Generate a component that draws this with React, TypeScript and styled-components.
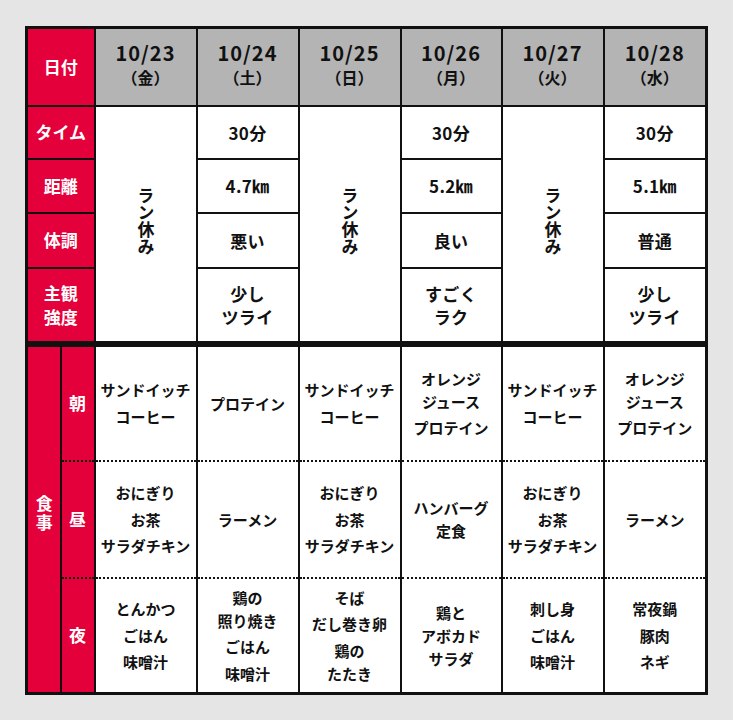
import React from 'react';
import styled, { createGlobalStyle, css } from 'styled-components';

const RED = '#e4003a';
const INK = '#111111';
const LINE = '#111111';

const GlobalStyle = createGlobalStyle`
  html, body {
    margin: 0;
    padding: 0;
    background: #e5e5e5;
  }
  body {
    font-family: "Noto Sans CJK JP", "Noto Sans", sans-serif;
    font-weight: 700;
    color: ${INK};
  }
`;

const Page = styled.div`
  padding: 26px 0;
  display: flex;
  justify-content: center;
`;

const Table = styled.table`
  border-collapse: collapse;
  table-layout: fixed;
  width: 680px;
  border: 3px solid ${LINE};
  background: #ffffff;
`;

const Col = styled.col<{ $w: number }>`
  width: ${(p) => p.$w}px;
`;

const Row = styled.tr<{ $h: number }>`
  height: ${(p) => p.$h}px;
`;

const baseCell = css`
  border: 2px solid ${LINE};
  padding: 0;
  text-align: center;
  vertical-align: middle;
  font-weight: 700;
`;

type Pos = 'first' | 'mid' | 'last' | undefined;

const mealBorders = css<{ $pos?: Pos }>`
  ${(p) =>
    p.$pos === 'first' &&
    css`
      border-top: 6px solid ${LINE};
      border-bottom: 2px dotted ${LINE};
    `}
  ${(p) =>
    p.$pos === 'mid' &&
    css`
      border-top: 2px dotted ${LINE};
      border-bottom: 2px dotted ${LINE};
    `}
  ${(p) =>
    p.$pos === 'last' &&
    css`
      border-top: 2px dotted ${LINE};
    `}
`;

const Label = styled.th<{ $pos?: Pos; $thick?: boolean }>`
  ${baseCell};
  background: ${RED};
  color: #ffffff;
  font-size: 17px;
  line-height: 24px;
  ${mealBorders};
  ${(p) =>
    p.$thick &&
    css`
      border-top: 6px solid ${LINE};
    `}
`;

const VerticalLabel = styled.span`
  writing-mode: vertical-rl;
  text-orientation: upright;
  display: inline-block;
  font-size: 17px;
  line-height: 20px;
  letter-spacing: 2px;
  margin-bottom: 6px;
`;

const DateHead = styled.th`
  ${baseCell};
  background: #b4b4b4;
  color: ${INK};
  padding-bottom: 3px;
`;

const DateText = styled.div`
  font-size: 20px;
  line-height: 24px;
  letter-spacing: 1px;
`;

const DowText = styled.div`
  font-size: 16px;
  line-height: 24px;
`;

const ValueCell = styled.td`
  ${baseCell};
  font-size: 17px;
  line-height: 23px;
  letter-spacing: 0.3px;
`;

const RestCell = styled.td`
  ${baseCell};
`;

const RestText = styled.span`
  writing-mode: vertical-rl;
  text-orientation: mixed;
  display: inline-block;
  font-size: 17px;
  line-height: 20px;
`;

const MealCell = styled.td<{ $pos?: Pos }>`
  ${baseCell};
  ${mealBorders};
`;

const MealList = styled.div`
  display: flex;
  flex-direction: column;
  align-items: center;
  gap: 3.5px;
`;

const MealItem = styled.div`
  font-size: 15px;
  line-height: 23px;
  white-space: pre-line;
`;

type Run = { time: string; dist: string; cond: string; strength: string };
type Day = { date: string; dow: string; run: Run | null };

const days: Day[] = [
  { date: '10/23', dow: '金', run: null },
  { date: '10/24', dow: '土', run: { time: '30分', dist: '4.7㎞', cond: '悪い', strength: '少し\nツライ' } },
  { date: '10/25', dow: '日', run: null },
  { date: '10/26', dow: '月', run: { time: '30分', dist: '5.2㎞', cond: '良い', strength: 'すごく\nラク' } },
  { date: '10/27', dow: '火', run: null },
  { date: '10/28', dow: '水', run: { time: '30分', dist: '5.1㎞', cond: '普通', strength: '少し\nツライ' } },
];

const meals: { label: string; items: string[][] }[] = [
  {
    label: '朝',
    items: [
      ['サンドイッチ', 'コーヒー'],
      ['プロテイン'],
      ['サンドイッチ', 'コーヒー'],
      ['オレンジ\nジュース', 'プロテイン'],
      ['サンドイッチ', 'コーヒー'],
      ['オレンジ\nジュース', 'プロテイン'],
    ],
  },
  {
    label: '昼',
    items: [
      ['おにぎり', 'お茶', 'サラダチキン'],
      ['ラーメン'],
      ['おにぎり', 'お茶', 'サラダチキン'],
      ['ハンバーグ\n定食'],
      ['おにぎり', 'お茶', 'サラダチキン'],
      ['ラーメン'],
    ],
  },
  {
    label: '夜',
    items: [
      ['とんかつ', 'ごはん', '味噌汁'],
      ['鶏の\n照り焼き', 'ごはん', '味噌汁'],
      ['そば', 'だし巻き卵', '鶏の\nたたき'],
      ['鶏と\nアボカド\nサラダ'],
      ['刺し身', 'ごはん', '味噌汁'],
      ['常夜鍋', '豚肉', 'ネギ'],
    ],
  },
];

const Multi = styled.span`
  white-space: pre-line;
`;

const runRows: { label: React.ReactNode; key: keyof Run; h: number }[] = [
  { label: 'タイム', key: 'time', h: 53 },
  { label: '距離', key: 'dist', h: 54 },
  { label: '体調', key: 'cond', h: 55 },
  { label: <Multi>{'主観\n強度'}</Multi>, key: 'strength', h: 76 },
];

const mealHeights = [117, 117, 116];
const positions: Pos[] = ['first', 'mid', 'last'];

export default function App() {
  return (
    <>
      <GlobalStyle />
      <Page>
        <Table>
          <colgroup>
            <Col $w={34} />
            <Col $w={34} />
            <Col $w={102} />
            <Col $w={102} />
            <Col $w={102} />
            <Col $w={101} />
            <Col $w={102} />
            <Col $w={103} />
          </colgroup>
          <tbody>
            <Row $h={78}>
              <Label colSpan={2}>日付</Label>
              {days.map((d) => (
                <DateHead key={d.date}>
                  <DateText>{d.date}</DateText>
                  <DowText>（{d.dow}）</DowText>
                </DateHead>
              ))}
            </Row>
            {runRows.map((r, ri) => (
              <Row $h={r.h} key={r.key}>
                <Label colSpan={2}>{r.label}</Label>
                {days.map((d) => {
                  if (!d.run) {
                    return ri === 0 ? (
                      <RestCell key={d.date} rowSpan={4}>
                        <RestText>ラン休み</RestText>
                      </RestCell>
                    ) : null;
                  }
                  return (
                    <ValueCell key={d.date}>
                      <Multi>{d.run[r.key]}</Multi>
                    </ValueCell>
                  );
                })}
              </Row>
            ))}
            {meals.map((m, mi) => (
              <Row $h={mealHeights[mi]} key={m.label}>
                {mi === 0 && (
                  <Label rowSpan={3} $thick>
                    <VerticalLabel>食事</VerticalLabel>
                  </Label>
                )}
                <Label $pos={positions[mi]}>{m.label}</Label>
                {m.items.map((list, ci) => (
                  <MealCell key={ci} $pos={positions[mi]}>
                    <MealList>
                      {list.map((it, ii) => (
                        <MealItem key={ii}>{it}</MealItem>
                      ))}
                    </MealList>
                  </MealCell>
                ))}
              </Row>
            ))}
          </tbody>
        </Table>
      </Page>
    </>
  );
}
